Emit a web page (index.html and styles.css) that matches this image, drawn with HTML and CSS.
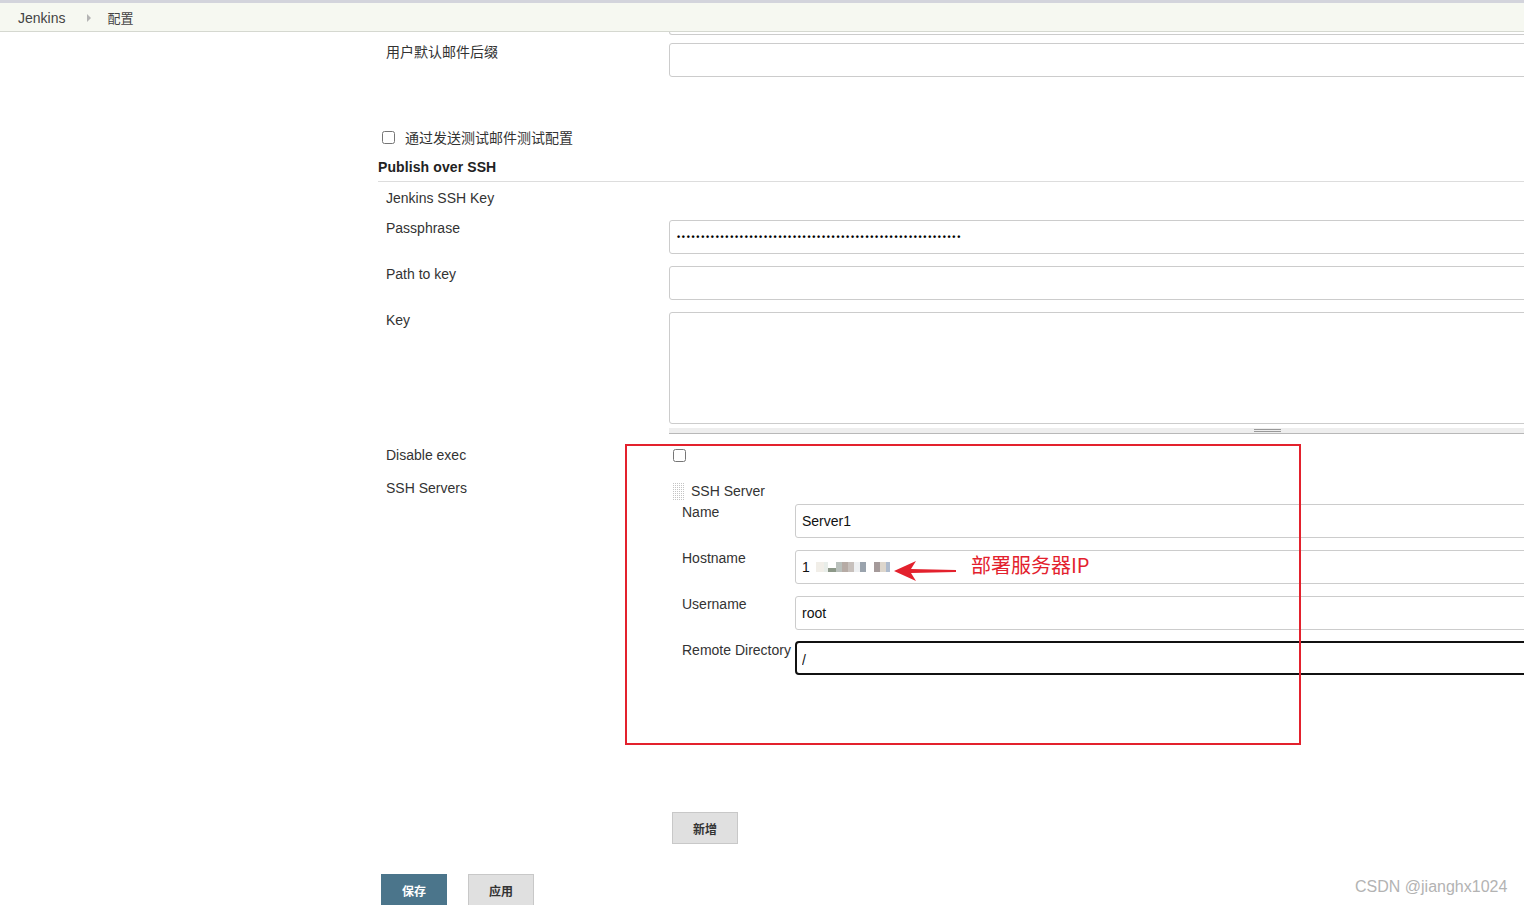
FILE: index.html
```html
<!DOCTYPE html>
<html lang="zh">
<head>
<meta charset="utf-8">
<title>配置 [Jenkins]</title>
<link rel="stylesheet" href="styles.css">
</head>
<body>
<div class="topline"></div>
<div class="breadcrumb">
  <a class="crumb">Jenkins</a>
  <span class="crumb-arrow"></span>
  <a class="crumb">配置</a>
</div>

<div class="main">
  <div class="row row-cut">
    <div></div>
    <div class="cut"></div>
  </div>

  <div class="row row-email">
    <div class="label cjk">用户默认邮件后缀</div>
    <div class="field"><input class="txt" type="text" value=""></div>
  </div>

  <div class="check-row">
    <input type="checkbox" class="cb">
    <span class="cjk">通过发送测试邮件测试配置</span>
  </div>

  <div class="section-head">Publish over SSH</div>

  <div class="row row-key-title">
    <div class="label">Jenkins SSH Key</div>
    <div></div>
  </div>

  <div class="row row-pass">
    <div class="label">Passphrase</div>
    <div class="field"><div class="txt pass"><span class="dots">•••••••••••••••••••••••••••••••••••••••••••••••••••••••••••</span></div></div>
  </div>

  <div class="row row-path">
    <div class="label">Path to key</div>
    <div class="field"><input class="txt" type="text" value=""></div>
  </div>

  <div class="row row-keyarea">
    <div class="label">Key</div>
    <div class="field">
      <textarea class="area"></textarea>
      <div class="resizer"><span class="grip"></span></div>
    </div>
  </div>

  <div class="row row-disable">
    <div class="label">Disable exec</div>
    <div class="field"><input type="checkbox" class="cb cb-disable"></div>
  </div>

  <div class="row row-servers">
    <div class="label">SSH Servers</div>
    <div class="field">
      <div class="repeat-head"><span class="handle"></span><span>SSH Server</span></div>
      <div class="sub first">
        <div class="sublabel">Name</div>
        <input class="txt" type="text" value="Server1">
      </div>
      <div class="sub">
        <div class="sublabel">Hostname</div>
        <div class="txt host"><span>1</span><span class="mosaic"><i class="m1"></i><i class="m2"></i><i class="m3"></i><i class="m4"></i><i class="m5"></i><i class="m6"></i><i class="m7"></i><i class="m8"></i><i class="gap"></i><i class="m9"></i><i class="m10"></i><i class="m11"></i></span></div>
      </div>
      <div class="sub">
        <div class="sublabel">Username</div>
        <input class="txt" type="text" value="root">
      </div>
      <div class="sub dir">
        <div class="sublabel">Remote Directory</div>
        <input class="txt focus" type="text" value="/">
      </div>
      <div class="add-wrap"><button class="btn cjk">新增</button></div>
    </div>
  </div>

  <div class="actions">
    <button class="btn primary cjk">保存</button>
    <button class="btn cjk">应用</button>
  </div>
</div>

<div class="annot-box"></div>
<svg class="annot-arrow" width="70" height="24" viewBox="0 0 70 24">
  <path d="M0 12 L22 2 L17 10 L62 11 L62 13 L17 14 L22 22 Z" fill="#e3212d"/>
</svg>
<div class="annot-text cjk">部署服务器IP</div>
<div class="watermark">CSDN @jianghx1024</div>
</body>
</html>
```
FILE: styles.css
```css
html, body {
  margin: 0;
  padding: 0;
  background: #fff;
}
body {
  position: relative;
  width: 1524px;
  height: 905px;
  overflow: hidden;
  font-family: "Liberation Sans", Arial, "Noto Sans CJK SC", sans-serif;
  font-size: 14px;
  color: #333;
}
.cjk {
  font-family: "Noto Sans CJK SC", "Liberation Sans", sans-serif;
}
.topline {
  height: 3px;
  background: #d3d4dc;
}
.breadcrumb {
  height: 28px;
  background: #f6f8f1;
  border-bottom: 1px solid #d5d8d0;
  display: flex;
  align-items: center;
  padding-left: 18px;
}
.crumb {
  font-size: 14px;
  color: #444;
  padding-top: 2px;
}
.crumb-arrow {
  width: 0;
  height: 0;
  border-left: 4px solid #b4b4b4;
  border-top: 4px solid transparent;
  border-bottom: 4px solid transparent;
  margin: 2px 16px 0 22px;
}
.breadcrumb .crumb:last-child {
  font-family: "Noto Sans CJK SC", sans-serif;
  font-size: 13px;
  padding-top: 0;
}

.main {
  padding-left: 370px;
}
.row {
  display: grid;
  grid-template-columns: 299px 1fr;
}
.label {
  padding-left: 16px;
  line-height: 16px;
  font-size: 14px;
  color: #333;
}
.label.cjk { font-size: 14px; line-height: 17px; }
.field {
  min-width: 0;
}
.txt {
  box-sizing: border-box;
  display: block;
  width: calc(100% + 20px);
  height: 34px;
  border: 1px solid #cccccc;
  border-radius: 3px;
  padding: 0 6px;
  font-family: "Liberation Sans", Arial, sans-serif;
  font-size: 14px;
  color: #111;
  background: #fff;
  outline: none;
}
.cut {
  height: 2px;
  width: calc(100% + 20px);
  border: 1px solid #cccccc;
  border-top: none;
  border-radius: 0 0 3px 3px;
}
.row-email { margin-top: 8px; }

.check-row {
  margin-top: 51px;
  padding-left: 12px;
  display: flex;
  align-items: center;
  height: 18px;
  font-size: 14px;
}
.check-row .cjk { margin-top: -1px; }
.cb {
  width: 13px;
  height: 13px;
  margin: 0 10px 0 0;
}
.section-head {
  margin-top: 12px;
  margin-left: 8px;
  font-weight: bold;
  font-size: 14px;
  line-height: 18px;
  padding-bottom: 5px;
  border-bottom: 1px solid #dddddd;
  color: #222;
  letter-spacing: 0.1px;
}
.row-key-title { margin-top: 6px; height: 18px; }
.row-key-title .label { line-height: 18px; padding-top: 1px; }
.row-pass { margin-top: 14px; }
.pass {
  display: flex;
  align-items: center;
  padding-left: 7px;
}
.dots {
  font-size: 9px;
  letter-spacing: 1.68px;
  color: #000;
  line-height: 9px;
  font-weight: bold;
}
.row-path { margin-top: 12px; }
.row-keyarea { margin-top: 12px; }
.area {
  box-sizing: border-box;
  display: block;
  width: calc(100% + 20px);
  height: 112px;
  border: 1px solid #cccccc;
  border-radius: 3px;
  resize: none;
  margin: 0;
  outline: none;
}
.resizer {
  margin-top: 4px;
  height: 5px;
  background: #eeeeee;
  border-bottom: 1px solid #b8b8b8;
  width: calc(100% + 20px);
  position: relative;
}
.grip {
  position: absolute;
  left: 585px;
  top: 1px;
  width: 27px;
  height: 1px;
  border-top: 1px solid #999;
  border-bottom: 1px solid #999;
}
.row-disable { margin-top: 13px; height: 18px; }
.cb-disable { margin: 2px 0 0 4px; }
.row-servers { margin-top: 15px; }
.repeat-head {
  display: flex;
  align-items: center;
  height: 18px;
  margin-top: 2px;
  padding-left: 3px;
  font-size: 14px;
}
.handle {
  width: 12px;
  height: 17px;
  margin-right: 7px;
  background-image: conic-gradient(#c4c4c4 25%, transparent 0);
  background-size: 2px 2px;
}
.sub {
  display: grid;
  grid-template-columns: 126px 1fr;
  margin-top: 12px;
}
.sub.first { margin-top: 4px; }
.sub.dir { margin-top: 11px; }
.sublabel {
  padding-left: 13px;
  line-height: 16px;
  font-size: 14px;
  white-space: nowrap;
}
.sub.dir .sublabel { padding-top: 1px; }
.sub .txt { width: calc(100% + 20px); }
.host {
  display: flex;
  align-items: center;
  padding-bottom: 1px;
}
.mosaic {
  display: flex;
  align-items: center;
  margin-left: 6px;
  height: 12px;
}
.mosaic i {
  display: block;
  width: 6px;
  height: 10px;
}
.mosaic .m1 { background: #f1eee8; width: 8px; }
.mosaic .m2 { background: #e8ede9; width: 4px; }
.mosaic .m3 { background: #8c9888; height: 4px; margin-top: 6px; width: 8px; }
.mosaic .m4 { background: #b9c0bc; }
.mosaic .m5 { background: #b6aba5; }
.mosaic .m6 { background: #c7c0bc; }
.mosaic .m7 { background: #eef0f2; }
.mosaic .m8 { background: #9aa3ad; }
.mosaic .gap { background: transparent; width: 8px; }
.mosaic .m9 { background: #a59a9a; }
.mosaic .m10 { background: #ddd6cc; }
.mosaic .m11 { background: #aebbcd; width: 4px; }
.txt.focus {
  border: 2px solid #111;
  padding-left: 5px;
  padding-top: 4px;
  border-radius: 4px;
}
.add-wrap {
  margin-top: 137px;
  padding-left: 3px;
}
.btn {
  box-sizing: border-box;
  width: 66px;
  height: 32px;
  background: #e0e0e0;
  border: 1px solid #c8c8c8;
  color: #333;
  font-weight: bold;
  font-size: 12px;
  padding: 0;
  cursor: pointer;
}
.actions {
  margin-top: 30px;
  padding-left: 11px;
  display: flex;
  gap: 21px;
}
.btn.primary {
  background: #4b758b;
  border-color: #4b758b;
  color: #fff;
}

.annot-box {
  position: absolute;
  left: 625px;
  top: 444px;
  width: 672px;
  height: 297px;
  border: 2px solid #e3212d;
}
.annot-arrow {
  position: absolute;
  left: 894px;
  top: 559px;
}
.annot-text {
  position: absolute;
  left: 971px;
  top: 551px;
  font-size: 20px;
  line-height: 28px;
  color: #e3212d;
}
.watermark {
  position: absolute;
  left: 1355px;
  top: 877px;
  font-size: 16px;
  line-height: 20px;
  color: #b3b3b3;
}
```
